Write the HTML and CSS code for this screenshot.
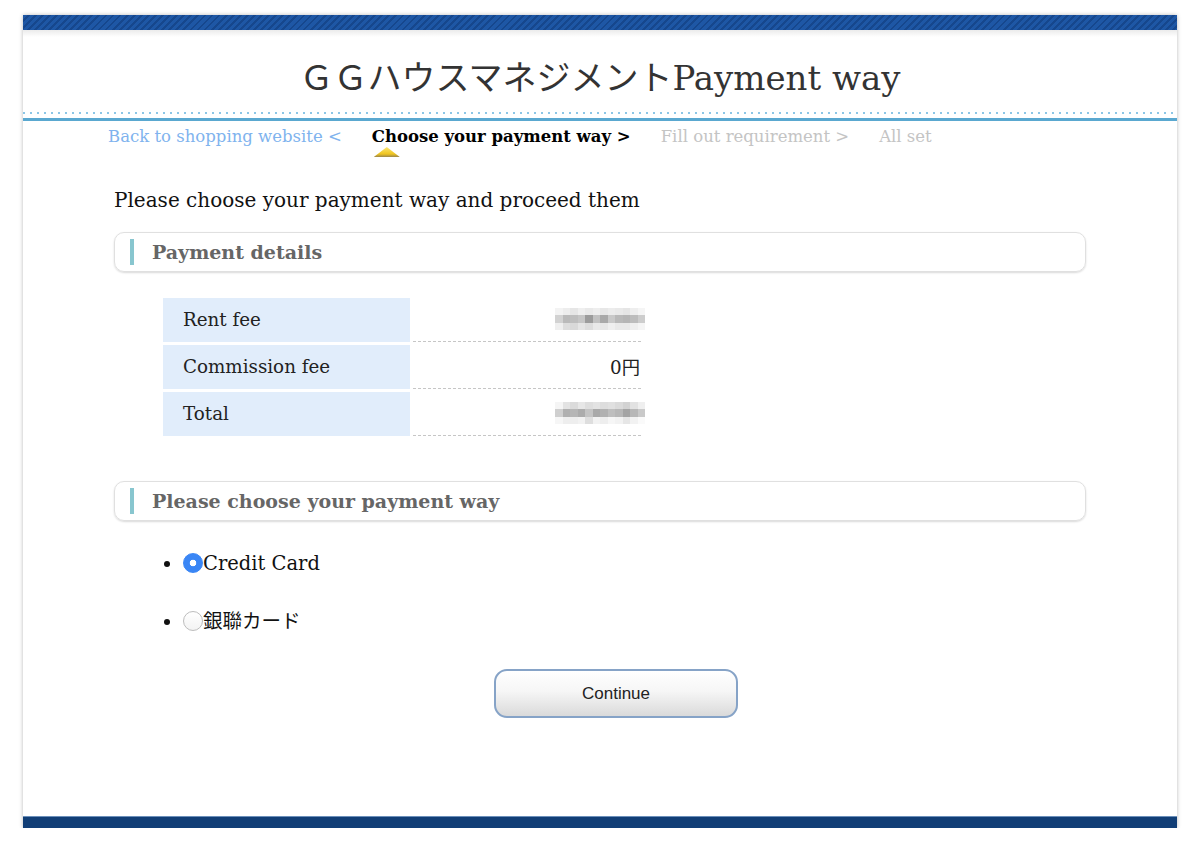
FILE: index.html
```html
<!DOCTYPE html>
<html lang="ja">

<head>
    <meta charset="UTF-8">
    <meta name="viewport" content="width=device-width, initial-scale=1.0">
    <title>GGハウスマネジメント Payment way</title>
    <link rel="stylesheet" href="styles.css">
</head>

<body>
    <div class="page">
        <div class="topbar"></div>
        <h1 class="title">ＧＧハウスマネジメントPayment way</h1>
        <div class="rule"></div>

        <ul class="steps">
            <li class="step done"><a href="#">Back to shopping website &lt;</a></li>
            <li class="step current">Choose your payment way &gt;</li>
            <li class="step">Fill out requirement &gt;</li>
            <li class="step">All set</li>
        </ul>

        <div class="content">
            <p class="lead">Please choose your payment way and proceed them</p>

            <h2 class="box-title">Payment details</h2>
            <table class="fees">
                <tr>
                    <th>Rent fee</th>
                    <td>
                        <svg class="blur" width="90" height="22" viewBox="0 0 12 3" preserveAspectRatio="none" shape-rendering="crispEdges">
                            <rect x="0" y="0" width="1" height="1" fill="#f3f3f3"/><rect x="1" y="0" width="1" height="1" fill="#ededed"/><rect x="2" y="0" width="1" height="1" fill="#e6e6e6"/><rect x="3" y="0" width="1" height="1" fill="#efefef"/><rect x="4" y="0" width="1" height="1" fill="#e9e9e9"/><rect x="5" y="0" width="1" height="1" fill="#eeeeee"/><rect x="6" y="0" width="1" height="1" fill="#e7e7e7"/><rect x="7" y="0" width="1" height="1" fill="#ececec"/><rect x="8" y="0" width="1" height="1" fill="#e9e9e9"/><rect x="9" y="0" width="1" height="1" fill="#e5e5e5"/><rect x="10" y="0" width="1" height="1" fill="#eeeeee"/><rect x="11" y="0" width="1" height="1" fill="#f5f5f5"/>
                            <rect x="0" y="1" width="1" height="1" fill="#d2d2d2"/><rect x="1" y="1" width="1" height="1" fill="#bababa"/><rect x="2" y="1" width="1" height="1" fill="#bebebe"/><rect x="3" y="1" width="1" height="1" fill="#c6c6c6"/><rect x="4" y="1" width="1" height="1" fill="#9c9c9c"/><rect x="5" y="1" width="1" height="1" fill="#c2c2c2"/><rect x="6" y="1" width="1" height="1" fill="#a9a9a9"/><rect x="7" y="1" width="1" height="1" fill="#c9c9c9"/><rect x="8" y="1" width="1" height="1" fill="#b9b9b9"/><rect x="9" y="1" width="1" height="1" fill="#b5b5b5"/><rect x="10" y="1" width="1" height="1" fill="#bdbdbd"/><rect x="11" y="1" width="1" height="1" fill="#cdcdcd"/>
                            <rect x="0" y="2" width="1" height="1" fill="#efefef"/><rect x="1" y="2" width="1" height="1" fill="#dddddd"/><rect x="2" y="2" width="1" height="1" fill="#d9d9d9"/><rect x="3" y="2" width="1" height="1" fill="#e5e5e5"/><rect x="4" y="2" width="1" height="1" fill="#dddddd"/><rect x="5" y="2" width="1" height="1" fill="#e9e9e9"/><rect x="6" y="2" width="1" height="1" fill="#e7e7e7"/><rect x="7" y="2" width="1" height="1" fill="#efefef"/><rect x="8" y="2" width="1" height="1" fill="#e9e9e9"/><rect x="9" y="2" width="1" height="1" fill="#e9e9e9"/><rect x="10" y="2" width="1" height="1" fill="#efefef"/><rect x="11" y="2" width="1" height="1" fill="#f5f5f5"/>
                        </svg>
                    </td>
                </tr>
                <tr>
                    <th>Commission fee</th>
                    <td>0円</td>
                </tr>
                <tr>
                    <th>Total</th>
                    <td>
                        <svg class="blur" width="90" height="22" viewBox="0 0 12 3" preserveAspectRatio="none" shape-rendering="crispEdges">
                            <rect x="0" y="0" width="1" height="1" fill="#f5f5f5"/><rect x="1" y="0" width="1" height="1" fill="#e3e3e3"/><rect x="2" y="0" width="1" height="1" fill="#dbdbdb"/><rect x="3" y="0" width="1" height="1" fill="#e7e7e7"/><rect x="4" y="0" width="1" height="1" fill="#dedede"/><rect x="5" y="0" width="1" height="1" fill="#e3e3e3"/><rect x="6" y="0" width="1" height="1" fill="#dddddd"/><rect x="7" y="0" width="1" height="1" fill="#e0e0e0"/><rect x="8" y="0" width="1" height="1" fill="#dadada"/><rect x="9" y="0" width="1" height="1" fill="#d2d2d2"/><rect x="10" y="0" width="1" height="1" fill="#e2e2e2"/><rect x="11" y="0" width="1" height="1" fill="#efefef"/>
                            <rect x="0" y="1" width="1" height="1" fill="#cfcfcf"/><rect x="1" y="1" width="1" height="1" fill="#b0b0b0"/><rect x="2" y="1" width="1" height="1" fill="#b6b6b6"/><rect x="3" y="1" width="1" height="1" fill="#acacac"/><rect x="4" y="1" width="1" height="1" fill="#c4c4c4"/><rect x="5" y="1" width="1" height="1" fill="#a9a9a9"/><rect x="6" y="1" width="1" height="1" fill="#b1b1b1"/><rect x="7" y="1" width="1" height="1" fill="#bebebe"/><rect x="8" y="1" width="1" height="1" fill="#b7b7b7"/><rect x="9" y="1" width="1" height="1" fill="#a4a4a4"/><rect x="10" y="1" width="1" height="1" fill="#b7b7b7"/><rect x="11" y="1" width="1" height="1" fill="#c9c9c9"/>
                            <rect x="0" y="2" width="1" height="1" fill="#f6f6f6"/><rect x="1" y="2" width="1" height="1" fill="#eeeeee"/><rect x="2" y="2" width="1" height="1" fill="#eeeeee"/><rect x="3" y="2" width="1" height="1" fill="#f2f2f2"/><rect x="4" y="2" width="1" height="1" fill="#dedede"/><rect x="5" y="2" width="1" height="1" fill="#f2f2f2"/><rect x="6" y="2" width="1" height="1" fill="#eeeeee"/><rect x="7" y="2" width="1" height="1" fill="#f6f6f6"/><rect x="8" y="2" width="1" height="1" fill="#f2f2f2"/><rect x="9" y="2" width="1" height="1" fill="#e6e6e6"/><rect x="10" y="2" width="1" height="1" fill="#f2f2f2"/><rect x="11" y="2" width="1" height="1" fill="#fafafa"/>
                        </svg>
                    </td>
                </tr>
            </table>

            <h2 class="box-title second">Please choose your payment way</h2>
            <ul class="methods">
                <li><label><input type="radio" name="method" value="card" checked>Credit Card</label></li>
                <li><label><input type="radio" name="method" value="unionpay">銀聯カード</label></li>
            </ul>

            <div class="actions">
                <button class="continue" type="button">Continue</button>
            </div>
        </div>

        <div class="footer"></div>
    </div>
</body>

</html>
```

FILE: styles.css
```css
body {
    margin: 0;
    background-color: #fff;
    font-family: "DejaVu Serif", "Noto Sans CJK JP", serif;
    color: #111;
}

.page {
    width: 1154px;
    height: 813px;
    margin: 15px auto 0;
    background-color: #fff;
    box-shadow: 0 0 4px rgba(0, 0, 0, 0.28);
    display: flex;
    flex-direction: column;
}

.topbar {
    height: 15px;
    background: repeating-linear-gradient(135deg, #1e57a5 0 3px, #16478d 3px 5px);
}

.title {
    margin: 0;
    padding: 28px 0 14px;
    font-size: 34px;
    line-height: 40px;
    font-weight: normal;
    text-align: center;
    color: #333;
    background: linear-gradient(#ebebeb, #fff) top / 100% 7px no-repeat;
}

.rule {
    height: 6px;
    background: repeating-linear-gradient(90deg, #8cc6e6 0 2px, transparent 2px 7px) top / 100% 2px no-repeat;
    border-bottom: 3px solid #5aa8d0;
}

.steps {
    list-style: none;
    margin: 0;
    padding: 6px 0 0 85px;
    display: flex;
    gap: 30px;
    font-size: 16.5px;
    line-height: 20px;
    color: #c4c4c4;
}

.steps a {
    color: #80b3ee;
    text-decoration: none;
}

.step.current {
    position: relative;
    color: #000;
    font-weight: bold;
}

.step.current::after {
    content: "";
    position: absolute;
    left: 2px;
    top: 100%;
    width: 26px;
    height: 10px;
    clip-path: polygon(50% 0, 100% 100%, 0 100%);
    background: linear-gradient(#fbe672, #efc41f 70%, #9c874a);
}

.content {
    width: 972px;
    margin: 0 auto;
}

.lead {
    margin: 41px 0 0;
    font-size: 20px;
    line-height: 24px;
}

.box-title {
    margin: 20px 0 0;
    height: 38px;
    padding-left: 15px;
    border: 1px solid #e0e0e0;
    border-radius: 10px;
    box-shadow: 0 1px 2px rgba(0, 0, 0, 0.15);
    display: flex;
    align-items: center;
    font-size: 19px;
    color: #666;
}

.box-title::before {
    content: "";
    width: 4px;
    height: 26px;
    margin-right: 18px;
    background-color: #88c6cf;
}

.box-title.second {
    margin-top: 42px;
}

.fees {
    margin: 23px 0 0 46px;
    border-spacing: 3px;
    font-size: 18.3px;
    color: #222;
}

.fees th,
.fees td {
    height: 44px;
    padding-bottom: 3px;
    box-sizing: border-box;
}

.fees th {
    width: 247px;
    padding-left: 20px;
    background-color: #e1edfb;
    text-align: left;
    font-weight: normal;
}

.fees td {
    width: 228px;
    padding-right: 1px;
    text-align: right;
    border-bottom: 1px dashed #c6c6c6;
}

.blur {
    display: inline-block;
    vertical-align: middle;
    margin-right: -5px;
}

.methods {
    margin: 31px 0 0;
    padding-left: 69px;
    font-size: 19.5px;
    line-height: 24px;
}

.methods li + li {
    margin-top: 34px;
}

.methods input {
    appearance: none;
    -webkit-appearance: none;
    width: 20px;
    height: 20px;
    margin: 0;
    box-sizing: border-box;
    border: 1px solid #bdbdbd;
    border-radius: 50%;
    background: linear-gradient(#fff, #f3f3f3);
    vertical-align: -3px;
}

.methods input:checked {
    border-color: #3a86f5;
    background: radial-gradient(circle, #fff 0 3px, #3a86f5 3.6px);
}

.actions {
    margin-top: 35px;
    padding-left: 380px;
}

.continue {
    width: 244px;
    height: 49px;
    border: 2px solid #86a3c7;
    border-radius: 13px;
    background: linear-gradient(#fff, #f6f6f6 45%, #dadada);
    font-family: "Liberation Sans", Arial, sans-serif;
    font-size: 17px;
    color: #222;
}

.footer {
    margin-top: auto;
    height: 12px;
    box-sizing: border-box;
    border-top: 1px solid #6b8fba;
    background-color: #113e76;
}
```
